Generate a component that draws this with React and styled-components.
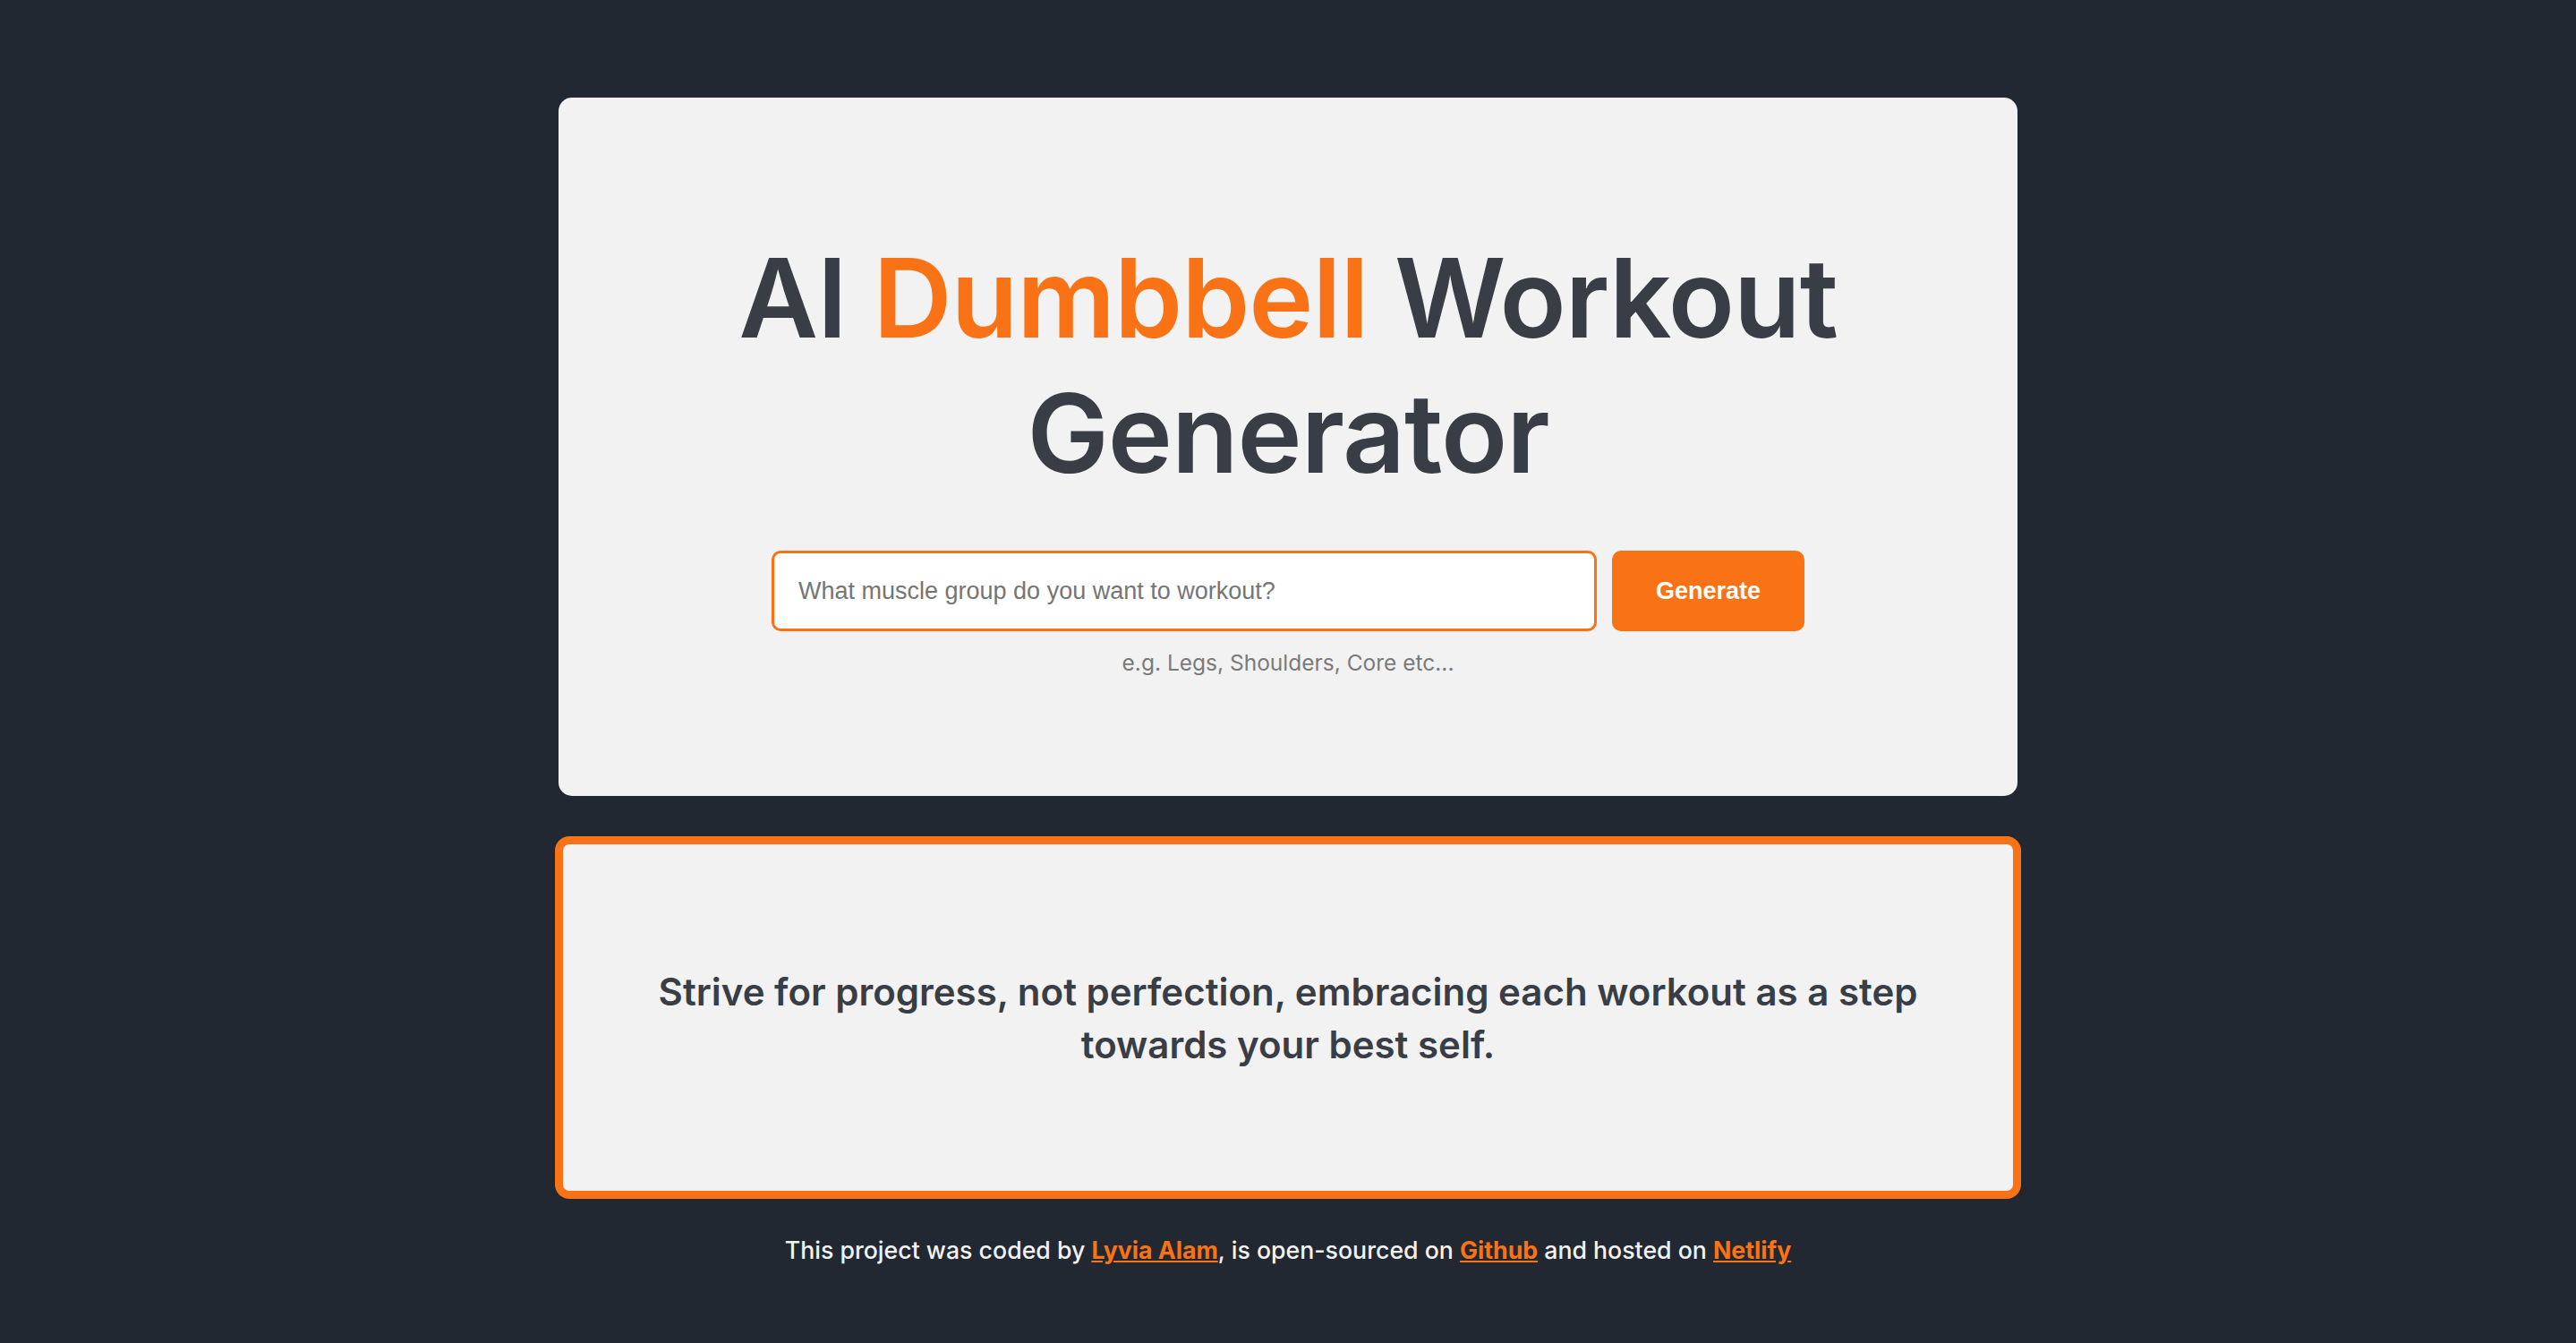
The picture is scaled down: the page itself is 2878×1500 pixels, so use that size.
import React from "react";
import styled, { createGlobalStyle } from "styled-components";

const ORANGE = "#f97316";
const INK = "#393e46";

const GlobalStyle = createGlobalStyle`
  body {
    margin: 0;
    background: #222831;
    font-family: Inter, "Liberation Sans", sans-serif;
  }
`;

export default function App() {
  return (
    <>
      <GlobalStyle />
      <Page>
        <GeneratorCard>
          <Title>
            AI <Accent>Dumbbell</Accent> Workout Generator
          </Title>
          <SearchForm onSubmit={(e) => e.preventDefault()}>
            <SearchInput type="search" placeholder="What muscle group do you want to workout?" />
            <GenerateButton type="submit">Generate</GenerateButton>
          </SearchForm>
          <Hint>e.g. Legs, Shoulders, Core etc...</Hint>
        </GeneratorCard>

        <QuoteCard>
          <Quote>
            Strive for progress, not perfection, embracing each workout as a step towards your best self.
          </Quote>
        </QuoteCard>

        <Footer>
          This project was coded by <FooterLink href="#">Lyvia Alam</FooterLink>, is open-sourced on{" "}
          <FooterLink href="#">Github</FooterLink> and hosted on <FooterLink href="#">Netlify</FooterLink>
        </Footer>
      </Page>
    </>
  );
}

const Page = styled.main`
  display: flex;
  flex-direction: column;
  align-items: center;
  padding-top: 109px;
`;

const GeneratorCard = styled.section`
  box-sizing: border-box;
  width: 1630px;
  height: 780px;
  padding-top: 148px;
  background: #f2f2f2;
  border-radius: 15px;
  display: flex;
  flex-direction: column;
  align-items: center;
`;

const Title = styled.h1`
  margin: 0;
  max-width: 1300px;
  text-align: center;
  color: ${INK};
  font-size: 122px;
  font-weight: 600;
  line-height: 151px;
  letter-spacing: -1px;
`;

const Accent = styled.span`
  color: ${ORANGE};
`;

const SearchForm = styled.form`
  display: flex;
  gap: 17px;
  margin-top: 56px;
`;

const SearchInput = styled.input`
  box-sizing: border-box;
  width: 922px;
  height: 90px;
  padding: 0 27px;
  border: 3px solid ${ORANGE};
  border-radius: 10px;
  background: #fff;
  font-family: "Liberation Sans", Arial, sans-serif;
  font-size: 27px;
  color: #333;
  outline: none;
  -webkit-appearance: none;

  &::placeholder {
    color: #757575;
  }
`;

const GenerateButton = styled.button`
  width: 215px;
  height: 90px;
  border: none;
  border-radius: 10px;
  background: ${ORANGE};
  color: #fff;
  font-family: "Liberation Sans", Arial, sans-serif;
  font-size: 27px;
  font-weight: 700;
  cursor: pointer;
`;

const Hint = styled.p`
  margin: 20px 0 0;
  color: #7a7a7a;
  font-size: 24.5px;
`;

const QuoteCard = styled.section`
  box-sizing: border-box;
  width: 1638px;
  height: 405px;
  margin-top: 45px;
  padding: 0 70px;
  border: 9px solid ${ORANGE};
  border-radius: 16px;
  background: #f2f2f2;
  display: flex;
  align-items: center;
  justify-content: center;
`;

const Quote = styled.p`
  margin: 0;
  text-align: center;
  color: ${INK};
  font-size: 42px;
  font-weight: 600;
  line-height: 59px;
`;

const Footer = styled.footer`
  margin-top: 41px;
  color: #f2f2f2;
  font-size: 26.7px;
  font-weight: 500;
`;

const FooterLink = styled.a`
  color: ${ORANGE};
  font-weight: 700;
  text-decoration: underline;
`;
